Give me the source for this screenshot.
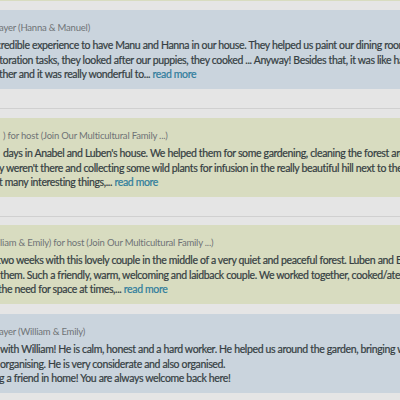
const cardText =
  "text-[10.5px] leading-[14.5px] tracking-[-0.35px] text-[#353e42] whitespace-nowrap [-webkit-text-stroke:0.2px_#353e42]";

type Line = { text: string; indent: number; more?: boolean };

function Card({
  tone,
  header,
  headerIndent,
  lines,
}: {
  tone: "blue" | "green";
  header: string;
  headerIndent: number;
  lines: Line[];
}) {
  return (
    <div
      className={`h-[79px] overflow-hidden pt-[11px] ${
        tone === "blue" ? "bg-[#cad4dd]" : "bg-[#d8dcc0]"
      }`}
    >
      <div
        className="whitespace-nowrap text-[9.5px] leading-[14px] tracking-[-0.2px] text-[#6f7376]"
        style={{ marginLeft: headerIndent }}
      >
        {header}
      </div>
      <div className="mt-[3px]">
        {lines.map((line, i) => (
          <div key={i} className={cardText} style={{ marginLeft: line.indent }}>
            {line.text}
            {line.more ? (
              <span className="text-[#2f7c9c] [-webkit-text-stroke:0.2px_#2f7c9c]"> read more</span>
            ) : null}
          </div>
        ))}
      </div>
    </div>
  );
}

export default function App() {
  return (
    <div className="h-[400px] w-[400px] overflow-hidden bg-[#e5e5e5] font-['Lato',sans-serif]">
      <div className="h-[1px] bg-[#d8dcc0]" />
      <div className="mt-[9px]">
        <Card
          tone="blue"
          header="ayer (Hanna & Manuel)"
          headerIndent={-1}
          lines={[
            { text: "credible experience to have Manu and Hanna in our house. They helped us paint our dining room", indent: -4 },
            { text: "storation tasks, they looked after our puppies, they cooked ... Anyway! Besides that, it was like having", indent: -5 },
            { text: "ther and it was really wonderful to...", indent: -1, more: true },
          ]}
        />
      </div>
      <div className="mt-[19px] h-[1px] bg-[#d0d0d0]" />
      <div className="mt-[9px]">
        <Card
          tone="green"
          header=") for host (Join Our Multicultural Family ...)"
          headerIndent={3}
          lines={[
            { text: "days in Anabel and Luben's house. We helped them for some gardening, cleaning the forest around", indent: 3 },
            { text: "y weren't there and collecting some wild plants for infusion in the really beautiful hill next to there", indent: -1 },
            { text: "t many interesting things,...", indent: -1, more: true },
          ]}
        />
      </div>
      <div className="mt-[19px] h-[1px] bg-[#d0d0d0]" />
      <div className="mt-[8px]">
        <Card
          tone="green"
          header="lliam & Emily) for host (Join Our Multicultural Family ...)"
          headerIndent={-2}
          lines={[
            { text: "two weeks with this lovely couple in the middle of a very quiet and peaceful forest. Luben and Bojana", indent: -3 },
            { text: "them. Such a friendly, warm, welcoming and laidback couple. We worked together, cooked/ate", indent: 0 },
            { text: "the need for space at times,...", indent: -2, more: true },
          ]}
        />
      </div>
      <div className="mt-[10px]">
        <Card
          tone="blue"
          header="ayer (William & Emily)"
          headerIndent={-1}
          lines={[
            { text: "with William! He is calm, honest and a hard worker. He helped us around the garden, bringing wood", indent: 0 },
            { text: "organising. He is very considerate and also organised.", indent: 0 },
            { text: "g a friend in home! You are always welcome back here!", indent: -1 },
          ]}
        />
      </div>
    </div>
  );
}
